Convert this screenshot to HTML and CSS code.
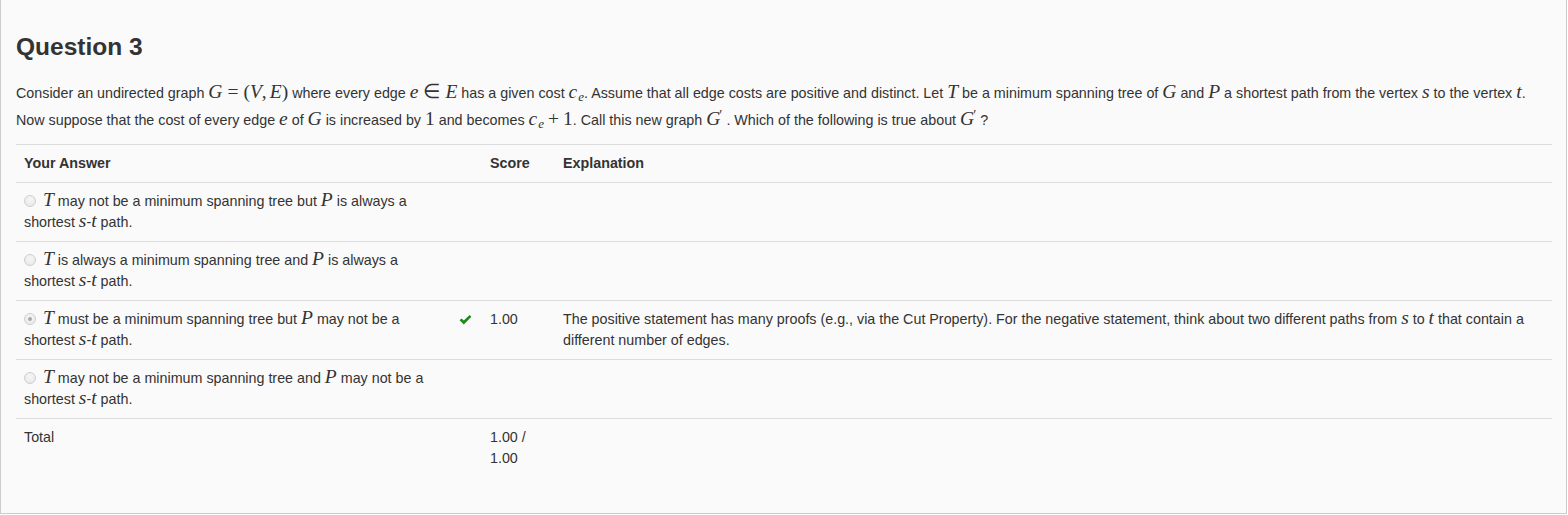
FILE: index.html
```html
<!DOCTYPE html>
<html lang="en">
<head>
<meta charset="utf-8">
<title>Question 3</title>
<link rel="stylesheet" href="styles.css">
</head>
<body>
<div class="panel">
  <h2 class="qtitle">Question 3</h2>
  <p class="prompt">Consider an undirected graph <span class="m"><i>G</i><span class="rel">=</span><span class="up">(</span><i>V</i><span class="up comma">,</span><i>E</i><span class="up">)</span></span> where every edge <span class="m"><i>e</i><span class="rel">∈</span><i>E</i></span> has a given cost <span class="m"><i>c</i><sub class="sub">e</sub></span>. Assume that all edge costs are positive and distinct. Let <span class="m"><i>T</i></span> be a minimum spanning tree of <span class="m"><i>G</i></span> and <span class="m"><i>P</i></span> a shortest path from the vertex <span class="m"><i>s</i></span> to the vertex <span class="m"><i>t</i></span>. Now suppose that the cost of every edge <span class="m"><i>e</i></span> of <span class="m"><i>G</i></span> is increased by <span class="m"><span class="up">1</span></span> and becomes <span class="m"><i>c</i><sub class="sub">e</sub><span class="bin">+</span><span class="up">1</span></span>. Call this new graph <span class="m"><i>G</i><span class="prime">′</span></span>. Which of the following is true about <span class="m"><i>G</i><span class="prime">′</span></span>?</p>

  <table class="result">
    <thead>
      <tr>
        <th class="c-ans">Your Answer</th>
        <th class="c-icon"></th>
        <th class="c-score">Score</th>
        <th class="c-exp">Explanation</th>
      </tr>
    </thead>
    <tbody>
      <tr>
        <td class="c-ans"><div class="answer"><span class="radio"></span> <span class="m"><i>T</i></span> may not be a minimum spanning tree but <span class="m"><i>P</i></span> is always a shortest <span class="m"><i>s</i></span>-<span class="m"><i>t</i></span> path.</div></td>
        <td class="c-icon"></td>
        <td class="c-score"></td>
        <td class="c-exp"></td>
      </tr>
      <tr>
        <td class="c-ans"><div class="answer"><span class="radio"></span> <span class="m"><i>T</i></span> is always a minimum spanning tree and <span class="m"><i>P</i></span> is always a shortest <span class="m"><i>s</i></span>-<span class="m"><i>t</i></span> path.</div></td>
        <td class="c-icon"></td>
        <td class="c-score"></td>
        <td class="c-exp"></td>
      </tr>
      <tr>
        <td class="c-ans"><div class="answer"><span class="radio checked"></span> <span class="m"><i>T</i></span> must be a minimum spanning tree but <span class="m"><i>P</i></span> may not be a shortest <span class="m"><i>s</i></span>-<span class="m"><i>t</i></span> path.</div></td>
        <td class="c-icon"><svg class="ok" width="13" height="10" viewBox="0 0 13 10" aria-hidden="true"><path d="M0.6 5.2 L2.5 3.4 L4.8 5.6 L10.6 0 L12.4 1.8 L4.8 9.4 Z" fill="#1e8a1e"/></svg></td>
        <td class="c-score">1.00</td>
        <td class="c-exp">The positive statement has many proofs (e.g., via the Cut Property). For the negative statement, think about two different paths from <span class="m"><i>s</i></span> to <span class="m"><i>t</i></span> that contain a different number of edges.</td>
      </tr>
      <tr>
        <td class="c-ans"><div class="answer"><span class="radio"></span> <span class="m"><i>T</i></span> may not be a minimum spanning tree and <span class="m"><i>P</i></span> may not be a shortest <span class="m"><i>s</i></span>-<span class="m"><i>t</i></span> path.</div></td>
        <td class="c-icon"></td>
        <td class="c-score"></td>
        <td class="c-exp"></td>
      </tr>
      <tr>
        <td class="c-ans">Total</td>
        <td class="c-icon"></td>
        <td class="c-score">1.00 / 1.00</td>
        <td class="c-exp"></td>
      </tr>
    </tbody>
  </table>
</div>
</body>
</html>
```

FILE: styles.css
```css
* {
  box-sizing: border-box;
}

html,
body {
  margin: 0;
  background: #ffffff;
}

body {
  font-family: "Liberation Sans", Arial, Helvetica, sans-serif;
  font-size: 14.3px;
  color: #333333;
}

.panel {
  width: 1567px;
  height: 514px;
  background: #fafafa;
  border: 1px solid #cccccc;
  border-top: none;
  padding: 27px 14px 0 15px;
}

.qtitle {
  margin: 0;
  font-size: 24.5px;
  line-height: 40px;
  font-weight: bold;
  color: #333333;
}

.prompt {
  margin: 13px 0 10px 0;
  line-height: 27px;
}

/* inline math */
.m {
  font-family: "Liberation Serif", "Times New Roman", serif;
  font-size: 19.5px;
  line-height: 14px;
  white-space: nowrap;
}

.m i {
  font-style: italic;
}

.m .up {
  font-style: normal;
}

.m .comma {
  margin-right: 3px;
}

.m .rel {
  font-style: normal;
  margin: 0 5px;
}

.m .bin {
  font-style: normal;
  margin: 0 4px;
}

.m .sub {
  font-size: 13px;
  font-style: italic;
  vertical-align: -3px;
  line-height: 10px;
  margin-left: 1px;
}

.m .prime {
  font-style: normal;
  font-size: 14px;
  line-height: 10px;
  vertical-align: 5px;
  margin-left: -1px;
  margin-right: 4px;
}

/* result table */
.result {
  width: 1536px;
  border-collapse: collapse;
  table-layout: fixed;
}

.result th,
.result td {
  padding: 8px;
  line-height: 21px;
  text-align: left;
  vertical-align: top;
  border-top: 1px solid #dddddd;
}

.result th {
  font-weight: bold;
}

.c-ans {
  width: 434px;
}

.c-icon {
  width: 32px;
}

.c-score {
  width: 73px;
}

.answer {
  width: 415px;
}

.radio {
  display: inline-block;
  width: 12px;
  height: 12px;
  border-radius: 50%;
  border: 1px solid #cfcfcf;
  background: radial-gradient(circle at 50% 35%, #f6f6f6 0%, #e6e6e6 100%);
  vertical-align: -1px;
  margin-right: 3px;
  position: relative;
}

.radio.checked::after {
  content: "";
  position: absolute;
  left: 3px;
  top: 3px;
  width: 4px;
  height: 4px;
  border-radius: 50%;
  background: #a8a8a8;
}

.ok {
  display: block;
  margin-top: 6px;
  margin-left: 1px;
}
```
